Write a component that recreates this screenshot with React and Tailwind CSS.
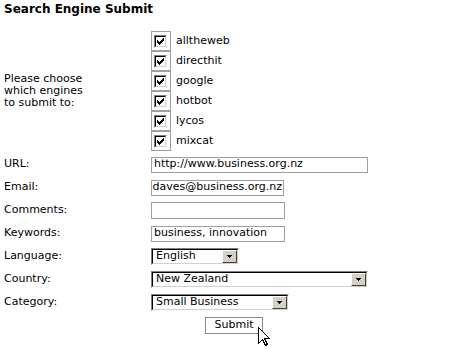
import React from "react";

const engines = ["alltheweb", "directhit", "google", "hotbot", "lycos", "mixcat"];

// classic 13x13 sunken checkbox with pixel check mark
const CheckBox = () => (
  <span className="flex w-[13px] h-[13px] border border-t-[#808080] border-l-[#808080] border-b-white border-r-white">
    <span className="flex flex-1 border border-t-black border-l-black border-b-[#d4d0c8] border-r-[#d4d0c8] bg-white">
      <svg width="9" height="9" viewBox="0 0 9 9" shapeRendering="crispEdges">
        {[2, 3, 4, 3, 2, 1, 0].map((top, i) => (
          <rect key={i} x={i + 1} y={top + 1} width="1" height="3" fill="#000" />
        ))}
      </svg>
    </span>
  </span>
);

const TextField = ({ value, width, height = "h-[16px]", alignEnd }) => (
  <div
    className={`flex items-center overflow-hidden whitespace-nowrap bg-white border border-[#a0a0a0] ${width} ${height} ${
      alignEnd ? "justify-end pr-[1px]" : "pl-[2px]"
    }`}
  >
    {value}
  </div>
);

const Select = ({ value, width }) => (
  <div className={`flex h-[17px] border border-t-[#808080] border-l-[#808080] border-b-white border-r-white ${width}`}>
    <div className="flex flex-1 border border-t-black border-l-black border-b-[#d4d0c8] border-r-[#d4d0c8] bg-white">
      <div className="flex-1 flex items-center pl-[3px] whitespace-nowrap overflow-hidden">{value}</div>
      <div className="flex items-center justify-center w-[15px] bg-[#d4d0c8] border border-t-white border-l-white border-b-[#404040] border-r-[#404040]">
        <svg width="5" height="3" viewBox="0 0 5 3" shapeRendering="crispEdges">
          <rect x="0" y="0" width="5" height="1" fill="#000" />
          <rect x="1" y="1" width="3" height="1" fill="#000" />
          <rect x="2" y="2" width="1" height="1" fill="#000" />
        </svg>
      </div>
    </div>
  </div>
);

const Row = ({ label, children }) => (
  <>
    <div className="flex items-center h-[23px] pl-[4px]">{label}</div>
    <div className="flex items-center h-[23px]">{children}</div>
  </>
);

export default function App() {
  return (
    <div className="relative w-[468px] h-[349px] bg-white text-black text-[11px] font-['DejaVu_Sans',Verdana,sans-serif] overflow-hidden">
      <h1 className="pl-[4px] pt-[2px] text-[12px] leading-[15px] font-bold">Search Engine Submit</h1>

      <div className="grid grid-cols-[151px_1fr] mt-[14px]">
        {/* engines */}
        <div className="flex items-center pl-[4px] leading-[12px]">
          Please choose
          <br />
          which engines
          <br />
          to submit to:
        </div>
        <div className="flex flex-col">
          {engines.map((name) => (
            <div key={name} className="flex items-center h-[20px]">
              <div className="flex items-center w-[20px] h-[20px] pl-[2px] border border-[#a0a0a0]">
                <CheckBox />
              </div>
              <span className="ml-[5px]">{name}</span>
            </div>
          ))}
        </div>

        <div className="col-span-2 h-[2px]" />

        <Row label="URL:">
          <TextField value="http://www.business.org.nz" width="w-[217px]" />
        </Row>
        <Row label="Email:">
          <TextField value="daves@business.org.nz" width="w-[133px]" alignEnd />
        </Row>
        <Row label="Comments:">
          <TextField value="" width="w-[134px]" height="h-[17px]" />
        </Row>
        <Row label="Keywords:">
          <TextField value="business, innovation" width="w-[134px]" />
        </Row>
        <Row label="Language:">
          <Select value="English" width="w-[88px]" />
        </Row>
        <Row label="Country:">
          <Select value="New Zealand" width="w-[217px]" />
        </Row>
        <Row label="Category:">
          <Select value="Small Business" width="w-[138px]" />
        </Row>

        <div className="col-span-2 flex justify-center items-center h-[23px]">
          <button className="flex items-center justify-center w-[58px] h-[17px] bg-white border border-[#8a8a8a] text-[11px]">
            Submit
          </button>
        </div>
      </div>

      {/* mouse pointer */}
      <svg
        className="absolute left-[258px] top-[327px]"
        width="13"
        height="20"
        viewBox="0 0 13 20"
        shapeRendering="crispEdges"
      >
        <path d="M0.5 0.5 L0.5 16.5 L4.5 12.5 L7.5 18.5 L9.5 17.5 L6.5 11.5 L11.5 11.5 Z" fill="#fff" stroke="#000" strokeWidth="1" />
      </svg>
    </div>
  );
}
